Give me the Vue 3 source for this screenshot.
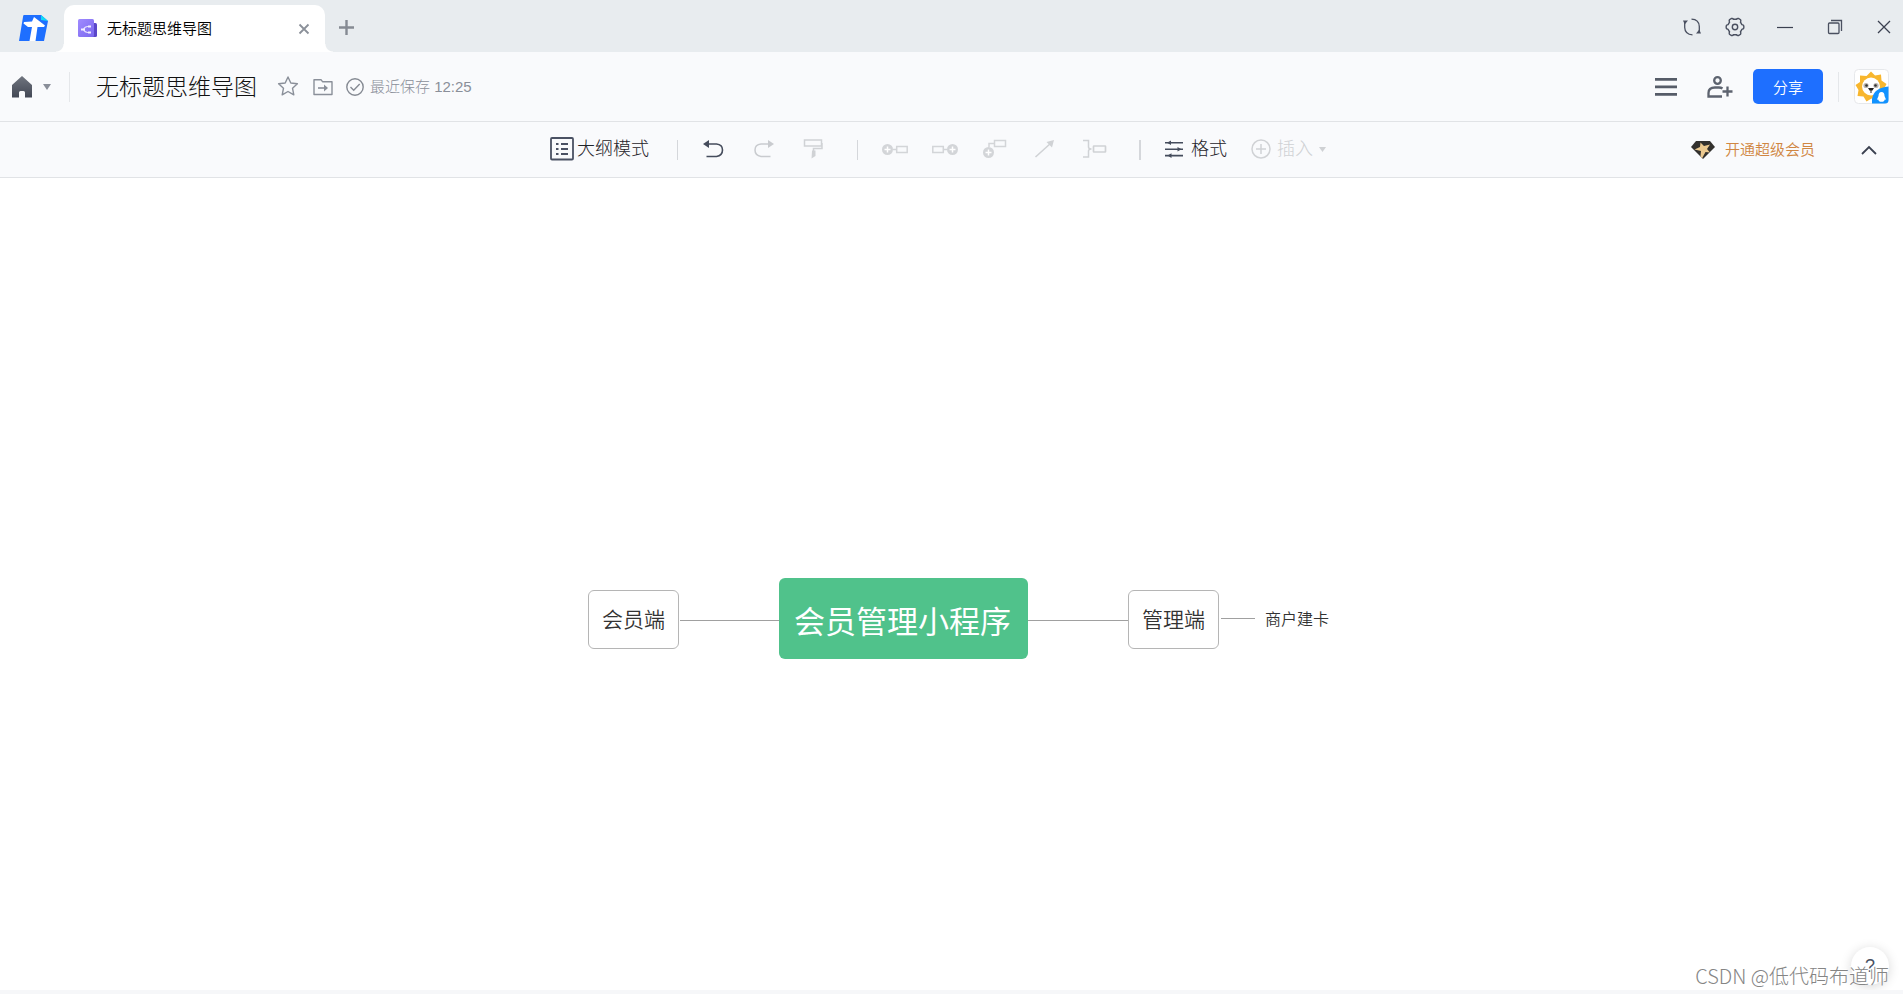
<script setup>
import { ref } from 'vue'

const docTitle = ref('无标题思维导图')
const savedAt = ref('12:25')

const nodes = [
  { id: 'member', text: '会员端', kind: 'branch', x: 588, y: 412 },
  { id: 'root', text: '会员管理小程序', kind: 'root', x: 779, y: 400 },
  { id: 'admin', text: '管理端', kind: 'branch', x: 1128, y: 412 },
  { id: 'card', text: '商户建卡', kind: 'leaf', x: 1265, y: 430 },
]

const links = [
  { id: 'member-root', x: 680, y: 442, width: 99 },
  { id: 'root-admin', x: 1028, y: 442, width: 100 },
  { id: 'admin-card', x: 1221, y: 440, width: 34 },
]
</script>

<template>
  <div class="app">
    <header class="titlebar">
      <svg class="logo" viewBox="0 0 30 26" width="30" height="26" aria-hidden="true">
        <path d="M5 0h17l7 6-4 20H0L4 2Q4 0 5 0z" fill="#1e6fff" />
        <path d="M22 0l7 6-7-1z" fill="#12d9f5" />
        <path d="M15 2l11 8.500-1 1.500h-6.500L16.500 26h-6L13 12H9L4.500 8.500 5 7l8-.5z" fill="#fff" />
      </svg>
      <div class="tab">
        <svg viewBox="0 0 20 19" width="20" height="19" aria-hidden="true">
          <defs>
            <linearGradient id="tabfill" x1="0" y1="0" x2="1" y2="1">
              <stop offset="0" stop-color="#a08bff" /><stop offset="1" stop-color="#7b68ee" />
            </linearGradient>
          </defs>
          <rect x="12" y="4" width="7" height="14" rx="1.500" fill="#5b47c9" />
          <rect x="0" y="0" width="16" height="18" rx="1.500" fill="url(#tabfill)" />
          <path d="M11 7.500H9.500Q7 7.500 5.500 10.500Q7 13.500 9.500 13.500H11" fill="none" stroke="#e4deff" stroke-width="1.200" />
          <path d="M3 9.500h4v2H3zM10 6.500h3v2h-3zM10 12.500h3v2h-3z" fill="#f3f0ff" />
        </svg>
        <span class="tab-name">{{ docTitle }}</span>
        <button class="icon-btn" aria-label="关闭标签">
          <svg viewBox="0 0 12 12" width="12" height="12"><path d="M1.500 1.500l9 9M10.500 1.500l-9 9" stroke="#8b9099" stroke-width="1.800" /></svg>
        </button>
      </div>
      <button class="icon-btn new-tab" aria-label="新建标签">
        <svg viewBox="0 0 16 16" width="16" height="16"><path d="M7.500 0v15M0 7.500h15" stroke="#858a93" stroke-width="2.400" /></svg>
      </button>
      <div class="window-tools">
        <button class="icon-btn" aria-label="刷新">
          <svg viewBox="0 0 18 18" width="18" height="18" fill="none" stroke="#4a5060" stroke-width="1.300">
            <path d="M8.500 1.200Q16 1.500 16.300 8.500V14M9.500 16.800Q2 16.500 1.700 9.500V4" />
            <path d="M0 2.500h5L1.700 6.500zM18 15.500h-5l3.300-4z" fill="#4a5060" stroke="none" />
          </svg>
        </button>
        <button class="icon-btn" aria-label="设置">
          <svg viewBox="0 0 20 20" width="20" height="20" fill="none" stroke="#4a5060" stroke-width="1.400">
            <path d="M6.500 1.500Q8 1.200 8.600 2.300h2.800Q12 1.200 13.500 1.500L15.500 2.700Q16.200 4 15.500 5.200L16.900 7.600Q18.500 7.800 18.800 9v2Q18.500 12.200 16.900 12.400L15.500 14.800Q16.200 16 15.500 17.300L13.500 18.500Q12 18.800 11.400 17.700H8.600Q8 18.800 6.500 18.500L4.500 17.300Q3.800 16 4.500 14.800L3.100 12.400Q1.500 12.200 1.200 11V9Q1.500 7.800 3.100 7.600L4.500 5.200Q3.800 4 4.500 2.700z" />
            <circle cx="10" cy="10" r="2.700" />
          </svg>
        </button>
        <button class="icon-btn win minimize" aria-label="最小化">
          <svg viewBox="0 0 16 16" width="16" height="16"><path d="M0 8.500h16" stroke="#3b4150" stroke-width="1.200" /></svg>
        </button>
        <button class="icon-btn win" aria-label="还原">
          <svg viewBox="0 0 16 16" width="16" height="16" fill="none" stroke="#4a5060" stroke-width="1.300">
            <rect x="1.500" y="4" width="10.500" height="10.500" rx="1" /><path d="M4 1.500h10.500V12" />
          </svg>
        </button>
        <button class="icon-btn win" aria-label="关闭">
          <svg viewBox="0 0 14 14" width="14" height="14"><path d="M1 1l12 12M13 1L1 13" stroke="#3b4150" stroke-width="1.300" /></svg>
        </button>
      </div>
    </header>

    <div class="docbar">
      <button class="icon-btn home" aria-label="首页">
        <svg viewBox="0 0 20 22" width="20" height="22">
          <defs>
            <linearGradient id="dark" x1="0" y1="0" x2="0" y2="1">
              <stop offset="0" stop-color="#70757f" /><stop offset="1" stop-color="#424754" />
            </linearGradient>
          </defs>
          <path d="M10 0l10 9v12.500h-7V16.500q0-1.500-1.500-1.500h-3Q7 15 7 16.500v5H0V9z" fill="url(#dark)" />
        </svg>
        <svg viewBox="0 0 8 6" width="8" height="6"><path d="M0 0h8L4 6z" fill="#8a8f99" /></svg>
      </button>
      <span class="rule"></span>
      <h1 class="doc-title">{{ docTitle }}</h1>
      <button class="icon-btn star" aria-label="收藏">
        <svg viewBox="0 0 22 22" width="22" height="22" fill="none" stroke="#8a8f99" stroke-width="1.400" stroke-linejoin="round">
          <path d="M11 1l2.800 6 6.600.8-4.900 4.400 1.300 6.600L11 15.500l-5.800 3.300 1.300-6.600L1.600 7.800 8.200 7z" />
        </svg>
      </button>
      <button class="icon-btn folder" aria-label="移动到">
        <svg viewBox="0 0 20 18" width="20" height="18" fill="none" stroke="#8a8f99" stroke-width="1.400">
          <path d="M1 1.700h7l1.500 2H19V16.500H1z" stroke-linejoin="round" /><path d="M5 10h8" stroke-width="1.600" /><path d="M11 6.500l4 3.500-4 3.500z" fill="#8a8f99" stroke="none" />
        </svg>
      </button>
      <div class="saved">
        <svg viewBox="0 0 18 18" width="18" height="18" fill="none" stroke="#858a93" stroke-width="1.400">
          <circle cx="9" cy="9" r="8.200" /><path d="M4.500 9l3.200 3.200 6-6.200" />
        </svg>
        <span>最近保存 {{ savedAt }}</span>
      </div>
      <div class="doc-actions">
        <button class="icon-btn menu" aria-label="菜单">
          <svg viewBox="0 0 22 20" width="22" height="20" fill="#565c68"><path d="M0 1h22v2.700H0zM0 8.500h22v2.700H0zM0 16h22v2.700H0z" /></svg>
        </button>
        <button class="icon-btn invite" aria-label="邀请协作者">
          <svg viewBox="0 0 26 22" width="26" height="22" fill="none" stroke="#5d636f" stroke-width="2.300">
            <circle cx="10.500" cy="4.500" r="3.300" /><path d="M15 20.500H1.500V17Q1.500 11.500 8 11.500h4q2 0 3.500 1M15.500 15.500h10M20.500 10.500v10" />
          </svg>
        </button>
        <button class="share">分享</button>
        <span class="rule"></span>
        <button class="icon-btn avatar" aria-label="账号">
          <svg viewBox="0 0 35 35" width="35" height="35">
            <rect x=".5" y=".5" width="34" height="34" rx="4" fill="#fff" stroke="#e6e8eb" />
            <path d="M17 2.500l4 4 6-1 .5 6 5 3.500-2.500 5 1.500 5-6 1.500-2.500 5-5.500-2-5 3-3-5-6-.5 1-6-3-5L6 13V6.500l6.500.5z" fill="#f8b62d" />
            <circle cx="17" cy="17.500" r="9" fill="#fff" />
            <circle cx="12" cy="16.500" r="2.600" fill="#b9b5b0" /><circle cx="22" cy="16.500" r="2.600" fill="#b9b5b0" />
            <circle cx="12.500" cy="16.500" r="1.300" fill="#333" /><circle cx="21.500" cy="16.500" r="1.300" fill="#333" />
            <path d="M14 19h6l-1.500 2.500h-3zM16.500 21.500h1V24h-1z" fill="#222" />
            <path d="M34.500 17.500V31q0 3.500-3.500 3.500H18V30Q20 18.500 34.500 17.500z" fill="#1192ff" />
            <path d="M27.500 23q3 0 3 4l1.500 3.500-1.500.2q0 2-3 2t-3-2l-1.500-.2 1.500-3.500q0-4 3-4z" fill="#fff" />
          </svg>
        </button>
      </div>
    </div>

    <div class="toolbar">
      <div class="tools">
        <button class="tool-btn outline">
          <svg viewBox="0 0 24 24" width="24" height="24" fill="none" stroke="#4a5163">
            <rect x="1" y="1" width="22" height="21.500" rx="1" stroke-width="1.800" />
            <path d="M6 7h2.500M11 7h7M6 12h2.500M11 12h7M6 17h2.500M11 17h7" stroke-width="1.800" />
          </svg>
          <span>大纲模式</span>
        </button>
        <span class="sep"></span>
        <div class="icons">
          <button class="icon-btn" aria-label="撤销">
            <svg viewBox="0 0 26 22" width="26" height="22" fill="none" stroke="#454c5c" stroke-width="1.600">
              <path d="M6 6h10.500Q22.500 6.500 22.500 12T16.500 18.500H6.500" /><path d="M3 6l6-4v8z" fill="#454c5c" stroke="none" />
            </svg>
          </button>
          <button class="icon-btn" aria-label="重做" disabled>
            <svg viewBox="0 0 26 22" width="26" height="22" fill="none" stroke="#c9cbcf" stroke-width="1.500">
              <path d="M20 6H11Q5 6.500 5 12t6 6.500h9.500" /><path d="M24 6l-6-4v8z" fill="#c9cbcf" stroke="none" />
            </svg>
          </button>
          <button class="icon-btn" aria-label="格式刷" disabled>
            <svg viewBox="0 0 26 22" width="26" height="22" fill="none" stroke="#d0d2d5" stroke-width="1.500">
              <path d="M4.500 2h17v6h-17zM22 5v5.500h-8.500V15" /><path d="M12 12.500h3.500V18L11.500 20.500z" fill="#d0d2d5" stroke="none" />
            </svg>
          </button>
        </div>
        <span class="sep roomy"></span>
        <div class="icons">
          <button class="icon-btn" aria-label="添加上级主题" disabled>
            <svg viewBox="0 0 26 22" width="26" height="22" fill="none" stroke="#d3d5d8" stroke-width="1.500">
              <circle cx="5.500" cy="11.500" r="5.500" fill="#d3d5d8" stroke="none" /><path d="M5.500 8.500v6M2.500 11.500h6" stroke="#fff" /><path d="M11 11.500h4M14.700 8.500h10.500v6H14.700z" />
            </svg>
          </button>
          <button class="icon-btn" aria-label="添加子主题" disabled>
            <svg viewBox="0 0 26 22" width="26" height="22" fill="none" stroke="#d3d5d8" stroke-width="1.500">
              <circle cx="20.500" cy="11.500" r="5.500" fill="#d3d5d8" stroke="none" /><path d="M20.500 8.500v6M17.500 11.500h6" stroke="#fff" /><path d="M15 11.500h-4M.8 8.500h10.500v6H.8z" />
            </svg>
          </button>
          <button class="icon-btn" aria-label="添加同级主题" disabled>
            <svg viewBox="0 0 26 22" width="26" height="22" fill="none" stroke="#d3d5d8" stroke-width="1.500">
              <circle cx="6.500" cy="14.500" r="5.500" fill="#d3d5d8" stroke="none" /><path d="M6.500 11.500v6M3.500 14.500h6" stroke="#fff" /><path d="M7 9V5.500h5M12.500 2.500h11v6h-11z" />
            </svg>
          </button>
          <button class="icon-btn" aria-label="关联线" disabled>
            <svg viewBox="0 0 26 22" width="26" height="22" fill="none" stroke="#d0d2d5" stroke-width="1.600">
              <path d="M3.500 19L19 5" /><path d="M22 2l-2 7.500L14.500 4z" fill="#d0d2d5" stroke="none" />
            </svg>
          </button>
          <button class="icon-btn" aria-label="概要" disabled>
            <svg viewBox="0 0 26 22" width="26" height="22" fill="none" stroke="#d0d2d5" stroke-width="1.500">
              <path d="M1 2.500h5.500V9q0 2 3 2-3 0-3 2v6H1" /><rect x="11.500" y="8" width="12" height="6" rx=".5" stroke-width="1.700" />
            </svg>
          </button>
        </div>
        <span class="sep roomy thick"></span>
        <button class="tool-btn format">
          <svg viewBox="0 0 18 20" width="18" height="20" fill="#454c5c">
            <path d="M0 3h18v1.600H0zM0 9.400h18V11H0zM0 15.800h18v1.600H0z" />
            <path d="M2 3.800l4-2.300v4.600zM16.500 10.200l-4-2.300v4.600zM2.500 16.600l4-2.300v4.600z" />
          </svg>
          <span>格式</span>
        </button>
        <button class="tool-btn insert" disabled>
          <svg viewBox="0 0 20 20" width="20" height="20" fill="none" stroke="#d0d2d5" stroke-width="1.500">
            <circle cx="10" cy="10" r="9" /><path d="M10 5v10M5 10h10" />
          </svg>
          <span>插入</span>
          <svg class="caret" viewBox="0 0 8 6" width="8" height="6"><path d="M0 0h7L3.500 5z" fill="#cfd1d4" /></svg>
        </button>
      </div>
      <div class="vip-area">
        <a class="vip" href="#">
          <svg viewBox="0 0 24 18" width="24" height="18">
            <path d="M5 0h14l5 6-12 12L0 6z" fill="#33312e" />
            <path d="M9.500 1.500l3.500 3.500 6-1.500-3 4.500 3 3.500-4.500-.5L11 17.500 9.500 15l.5-5-6.500-1.500L9 6z" fill="#ecc98f" />
          </svg>
          <span>开通超级会员</span>
        </a>
        <button class="icon-btn" aria-label="收起工具栏">
          <svg viewBox="0 0 16 10" width="16" height="10" fill="none" stroke="#3b4150" stroke-width="1.800"><path d="M1 9l7-7 7 7" /></svg>
        </button>
      </div>
    </div>

    <main class="canvas">
      <span
        v-for="l in links"
        :key="l.id"
        class="link"
        :style="{ left: l.x + 'px', top: l.y + 'px', width: l.width + 'px' }"
      ></span>
      <div
        v-for="n in nodes"
        :key="n.id"
        class="node"
        :class="n.kind"
        :style="{ left: n.x + 'px', top: n.y + 'px' }"
      >{{ n.text }}</div>
      <button class="help" aria-label="帮助">?</button>
      <span class="credit">CSDN @低代码布道师</span>
    </main>
    <footer class="bottom"></footer>
  </div>
</template>

<style>
html,
body {
  overflow: hidden;
}
</style>

<style scoped>
.app {
  display: flex;
  flex-direction: column;
  height: 100vh;
  font-family: "Liberation Sans", "Noto Sans CJK SC", sans-serif;
  font-weight: 300;
  color: #1f2329;
  background: #fff;
}
.app * {
  box-sizing: border-box;
}
svg {
  display: block;
  flex: none;
}
button {
  font: inherit;
  color: inherit;
  border: 0;
  background: none;
  padding: 0;
}
.icon-btn {
  display: flex;
  align-items: center;
  justify-content: center;
}
.titlebar {
  display: flex;
  align-items: center;
  height: 52px;
  padding: 4px 12px 0 19px;
  background: #e8ecef;
}
.logo {
  margin-right: 15px;
}
.tab {
  position: relative;
  display: flex;
  align-items: center;
  align-self: stretch;
  width: 261px;
  margin-top: 1px;
  padding: 0 15px 0 14px;
  background: #fff;
  border-radius: 10px 10px 0 0;
}
.tab::before,
.tab::after {
  content: "";
  position: absolute;
  bottom: 0;
  width: 8px;
  height: 8px;
}
.tab::before {
  left: -8px;
  background: radial-gradient(circle at 0 0, transparent 7px, #fff 8px);
}
.tab::after {
  right: -8px;
  background: radial-gradient(circle at 100% 0, transparent 7px, #fff 8px);
}
.tab-name {
  flex: 1;
  margin-left: 9px;
  font-size: 15px;
  line-height: 20px;
  font-weight: 350;
  color: #000;
}
.new-tab {
  margin-left: 14px;
}
.window-tools {
  display: flex;
  align-items: center;
  gap: 24px;
  height: 44px;
  margin-left: auto;
  padding-bottom: 2px;
}
.win {
  margin-left: 10px;
}
.win.minimize {
  margin-left: 8px;
}
.docbar {
  display: flex;
  align-items: center;
  height: 70px;
  padding: 0 14px 0 12px;
  background: #f9fafc;
  border-bottom: 1px solid #e1e3e6;
}
.home {
  gap: 11px;
}
.rule {
  width: 1px;
  height: 30px;
  background: #e5e7ea;
}
.home + .rule {
  margin: 0 26px 0 18px;
}
.doc-title {
  margin: 0;
  font-size: 23px;
  line-height: 32px;
  font-weight: 300;
  color: #111;
}
.star {
  margin-left: 20px;
}
.folder {
  margin-left: 14px;
}
.saved {
  display: flex;
  align-items: center;
  gap: 6px;
  margin-left: 13px;
  font-size: 15px;
  line-height: 20px;
  color: #8a8f99;
}
.doc-actions {
  display: flex;
  align-items: center;
  margin-left: auto;
}
.invite {
  margin-left: 30px;
}
.share {
  width: 70px;
  height: 35px;
  margin: 0 15px 0 20px;
  font-size: 15px;
  font-weight: 350;
  color: #fff;
  background: #1e6fff;
  border-radius: 5px;
}
.avatar {
  margin-left: 15px;
}
.toolbar {
  display: grid;
  grid-template-columns: 1fr auto 1fr;
  align-items: center;
  height: 56px;
  padding-right: 26px;
  background: #f9fafc;
  border-bottom: 1px solid #e1e3e6;
}
.tools {
  grid-column: 2;
  display: flex;
  align-items: center;
  padding-bottom: 2px;
}
.tool-btn {
  display: flex;
  align-items: center;
  font-size: 18px;
  line-height: 24px;
  color: #1f2329;
}
.outline {
  gap: 3px;
}
.format {
  gap: 8px;
}
.insert {
  gap: 6px;
  margin-left: 24px;
  color: #cfd1d4;
}
.caret {
  margin-top: 3px;
}
.sep {
  width: 1px;
  height: 20px;
  margin: 2px 22px 0 28px;
  background: #d5d7db;
}
.sep.roomy {
  margin: 2px 24px 0 31px;
}
.sep.thick {
  width: 2px;
}
.icons {
  display: flex;
  gap: 24px;
}
.vip-area {
  grid-column: 3;
  display: flex;
  align-items: center;
  justify-content: flex-end;
  gap: 46px;
}
.vip {
  display: flex;
  align-items: center;
  gap: 10px;
  font-size: 15px;
  line-height: 20px;
  font-weight: 350;
  color: #d08642;
  text-decoration: none;
}
.canvas {
  position: relative;
  flex: 1;
  overflow: hidden;
  background: #fff;
}
.link {
  position: absolute;
  height: 1px;
  background: #a0a0a0;
}
.node {
  position: absolute;
  white-space: nowrap;
  color: #333;
}
.branch {
  padding: 14px 13px;
  font-size: 21px;
  line-height: 29px;
  font-weight: 350;
  background: #fff;
  border: 1px solid #b5b5b5;
  border-radius: 6px;
}
.root {
  padding: 25px 17px 16px 15px;
  font-size: 31px;
  line-height: 40px;
  font-weight: 400;
  color: #fff;
  background: #50c28b;
  border-radius: 6px;
}
.leaf {
  font-size: 16px;
  line-height: 24px;
  font-weight: 350;
}
.help {
  position: absolute;
  right: 14px;
  bottom: 5px;
  width: 38px;
  height: 38px;
  font-size: 18px;
  color: #4a5163;
  background: #fff;
  border-radius: 50%;
  box-shadow: 0 2px 12px rgba(0, 0, 0, 0.16);
}
.credit {
  position: absolute;
  right: 14px;
  bottom: 0;
  font-family: "Noto Sans CJK SC", sans-serif;
  font-size: 20px;
  line-height: 28px;
  color: #858585;
  text-shadow: -1px -1px 0 #fff;
}
.bottom {
  height: 4px;
  background: #f6f7f9;
}
</style>
